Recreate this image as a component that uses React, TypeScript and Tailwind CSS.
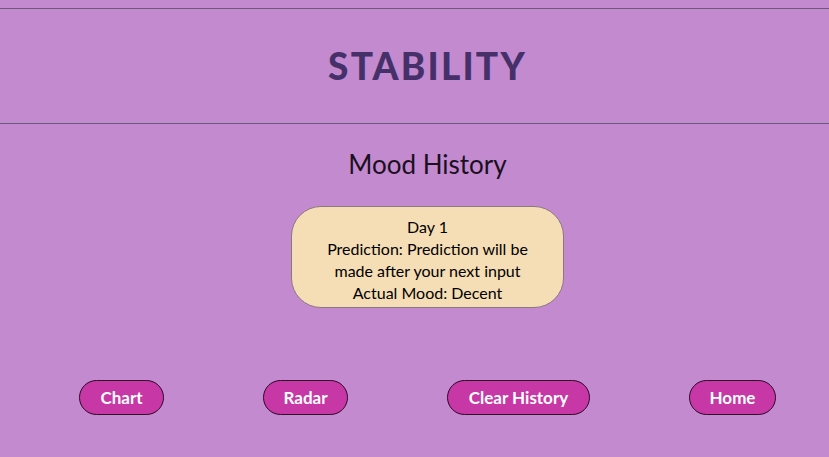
const buttons = [
  { label: "Chart", width: "w-[85px]" },
  { label: "Radar", width: "w-[85px]" },
  { label: "Clear History", width: "w-[143px]" },
  { label: "Home", width: "w-[87px]" },
];

export default function App() {
  return (
    <div
      className="min-h-[457px] bg-[#c38ad0] pt-2"
      style={{ fontFamily: "Lato, 'Open Sans', sans-serif" }}
    >
      {/* Header */}
      <header className="flex h-[116px] items-center justify-center border-y border-[#6a5a7c] pl-[26px]">
        <h1 className="text-[37px] font-black tracking-[2.2px] text-[#45306a]">
          STABILITY
        </h1>
      </header>

      <div className="pl-[26px]">
        {/* History */}
        <main className="flex flex-col items-center">
          <h2 className="mt-[24px] text-[26px] leading-[32px] text-[#1a1020]">
            Mood History
          </h2>
          <div className="mt-[26px] flex w-[273px] flex-col items-center rounded-[30px] border border-[#8a7a80] bg-[#f5ddb5] px-[28px] pt-[9px] pb-[3px] text-center text-[16px] leading-[22px] text-black">
            <p>Day 1</p>
            <p>Prediction: Prediction will be made after your next input</p>
            <p>Actual Mood: Decent</p>
          </div>
        </main>

        {/* Actions */}
        <nav className="mt-[72px] flex justify-center gap-[99px]">
          {buttons.map((b) => (
            <button
              key={b.label}
              className={`${b.width} h-[35px] rounded-[18px] border border-[#2a0a25] bg-[#c837a6] text-[17px] font-bold text-white`}
            >
              {b.label}
            </button>
          ))}
        </nav>
      </div>
    </div>
  );
}
